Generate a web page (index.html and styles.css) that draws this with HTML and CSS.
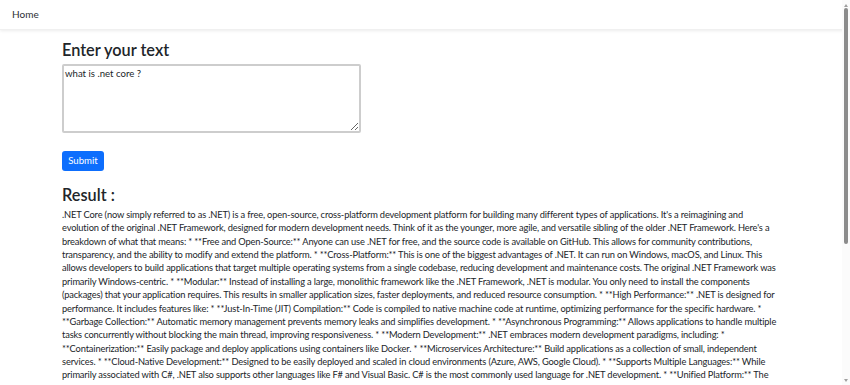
FILE: index.html
```html
<!DOCTYPE html>
<html>
<head>
	<title>Ask</title>
	<link rel="stylesheet" href="styles.css">
</head>
<body>
	<nav class='top-bar'>
		<a class='nav-link' href="#">Home</a>
	</nav>

	<main class='page'>
		<h3 class='title'>Enter your text</h3>
		<textarea class='ask-box'>what is .net core ?</textarea>
		<div>
			<button class='submit-btn'>Submit</button>
		</div>

		<h3 class='title result-title'>Result :</h3>
		<p class='answer'>.NET Core (now simply referred to as .NET) is a free, open-source, cross-platform development platform for building many different types of applications. It's a reimagining and evolution of the original .NET Framework, designed for modern development needs. Think of it as the younger, more agile, and versatile sibling of the older .NET Framework. Here's a breakdown of what that means: * **Free and Open-Source:** Anyone can use .NET for free, and the source code is available on GitHub. This allows for community contributions, transparency, and the ability to modify and extend the platform. * **Cross-Platform:** This is one of the biggest advantages of .NET. It can run on Windows, macOS, and Linux. This allows developers to build applications that target multiple operating systems from a single codebase, reducing development and maintenance costs. The original .NET Framework was primarily Windows-centric. * **Modular:** Instead of installing a large, monolithic framework like the .NET Framework, .NET is modular. You only need to install the components (packages) that your application requires. This results in smaller application sizes, faster deployments, and reduced resource consumption. * **High Performance:** .NET is designed for performance. It includes features like: * **Just-In-Time (JIT) Compilation:** Code is compiled to native machine code at runtime, optimizing performance for the specific hardware. * **Garbage Collection:** Automatic memory management prevents memory leaks and simplifies development. * **Asynchronous Programming:** Allows applications to handle multiple tasks concurrently without blocking the main thread, improving responsiveness. * **Modern Development:** .NET embraces modern development paradigms, including: * **Containerization:** Easily package and deploy applications using containers like Docker. * **Microservices Architecture:** Build applications as a collection of small, independent services. * **Cloud-Native Development:** Designed to be easily deployed and scaled in cloud environments (Azure, AWS, Google Cloud). * **Supports Multiple Languages:** While primarily associated with C#, .NET also supports other languages like F# and Visual Basic. C# is the most commonly used language for .NET development. * **Unified Platform:** The release of .NET 5 brought the .NET Framework, .NET Core and Xamarin together into a single platform, so you can use one set of tools and libraries to build web, desktop, mobile, cloud, gaming and IoT applications. * **Large and Active Community:** .NET has a large and active community of developers who contribute libraries, tools and documentation, and Microsoft provides long-term support releases. * **Rich Tooling:** Visual Studio, Visual Studio Code and the .NET CLI make it easy to create, build, test and deploy applications.</p>
	</main>

	<div class='scroll-rail'>
		<span class='rail-arrow up'></span>
		<span class='rail-thumb'></span>
		<span class='rail-arrow down'></span>
	</div>
</body>
</html>
```
FILE: styles.css
```css
body{
	margin: 0;
	font-family: Lato, "Open Sans", sans-serif;
	font-size: 9.3px;
	letter-spacing: -0.15px;
	line-height: 13.35px;
	color: #212529;
	background-color: white;
}
.top-bar{
	height: 30px;
	display: flex;
	align-items: center;
	padding-left: 12px;
	box-shadow: 0 1px 3px rgba(0, 0, 0, 0.08);
	border-bottom: 1px solid #f0f0f0;
	box-sizing: border-box;
}
.nav-link{
	color: #2b2f33;
	text-decoration: none;
	font-size: 10px;
	letter-spacing: 0;
}
.page{
	width: 718px;
	padding-left: 62px;
	padding-top: 10px;
}
.title{
	font-size: 16.3px;
	font-weight: 600;
	letter-spacing: 0;
	margin: 0 0 4px 0;
	line-height: 1.2;
}
.ask-box{
	display: block;
	width: 299px;
	height: 69px;
	box-sizing: border-box;
	border: 2px solid #cdcdcd;
	border-radius: 2px;
	padding: 2px 1px;
	font-family: Lato, "Open Sans", sans-serif;
	font-size: 9.6px;
	color: #212529;
	resize: both;
	margin-bottom: 18px;
}
.submit-btn{
	height: 20px;
	width: 42px;
	padding: 0;
	background-color: #0d6efd;
	color: white;
	border: none;
	border-radius: 3px;
	font-family: Lato, "Open Sans", sans-serif;
	font-size: 9.6px;
}
.result-title{
	margin-top: 14px;
	margin-bottom: 4px;
}
.answer{
	margin: 0;
}

/* page scrollbar, drawn since the shot hides the real one */
.scroll-rail{
	position: fixed;
	top: 0;
	right: 0;
	width: 8px;
	height: 100%;
	background-color: #fbfbfb;
	display: flex;
	flex-direction: column;
	align-items: center;
}
.rail-thumb{
	width: 4px;
	height: 236px;
	margin: 1px 1px 0 0;
	background-color: #8c8c8c;
	border-radius: 2px;
}
.rail-arrow{
	width: 0;
	height: 0;
	border-left: 2px solid transparent;
	border-right: 2px solid transparent;
	margin-right: 1px;
}
.rail-arrow.up{
	margin-top: 4px;
	border-bottom: 3px solid #a0a0a0;
}
.rail-arrow.down{
	margin-top: auto;
	margin-bottom: 3px;
	border-top: 3px solid #a0a0a0;
}
```
